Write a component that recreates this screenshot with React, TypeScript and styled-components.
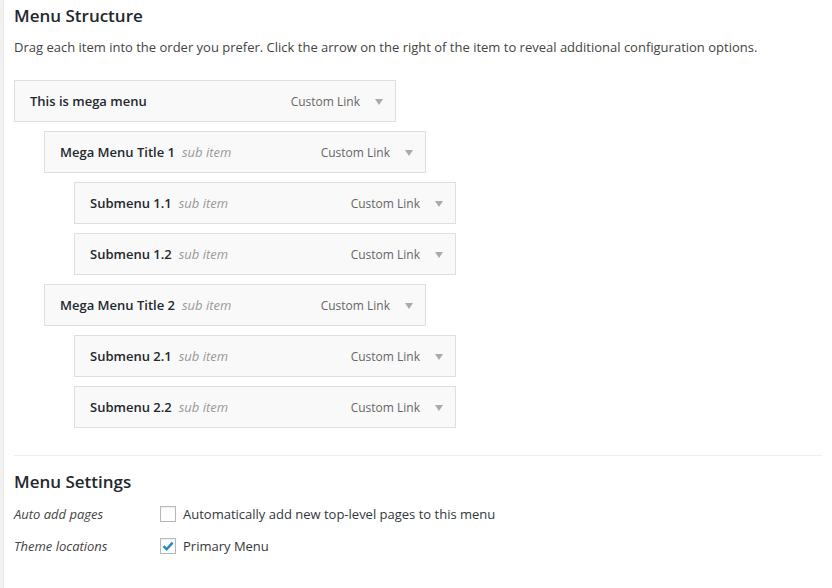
import styled, { createGlobalStyle } from "styled-components";

const GlobalStyle = createGlobalStyle`
  html, body {
    margin: 0;
    padding: 0;
    background: #fff;
  }
  body {
    font-family: "Open Sans", "Liberation Sans", sans-serif;
    color: #444;
    font-size: 13px;
  }
`;

type MenuItem = {
  title: string;
  depth: number;
};

const items: MenuItem[] = [
  { title: "This is mega menu", depth: 0 },
  { title: "Mega Menu Title 1", depth: 1 },
  { title: "Submenu 1.1", depth: 2 },
  { title: "Submenu 1.2", depth: 2 },
  { title: "Mega Menu Title 2", depth: 1 },
  { title: "Submenu 2.1", depth: 2 },
  { title: "Submenu 2.2", depth: 2 },
];

const Page = styled.div`
  display: flex;
  min-height: 588px;
`;

const Gutter = styled.div`
  width: 3px;
  flex-shrink: 0;
  background: #f1f1f1;
  border-right: 1px solid #e5e5e5;
`;

const Main = styled.div`
  flex: 1;
  padding: 0 10px 0 10px;
`;

const Heading = styled.h3`
  margin: 0;
  padding-top: 5px;
  font-size: 17px;
  font-weight: 600;
  line-height: 22px;
  color: #23282d;
`;

const Description = styled.p`
  margin: 10px 0 0;
  line-height: 20px;
  color: #444;
`;

const List = styled.ul`
  list-style: none;
  margin: 23px 0 0;
  padding: 0;
`;

const Item = styled.li<{ $depth: number }>`
  margin: 0 0 9px ${(p) => p.$depth * 30}px;
`;

const Bar = styled.div`
  box-sizing: border-box;
  width: 382px;
  height: 42px;
  display: flex;
  align-items: center;
  padding: 0 12px 0 15px;
  background: #f9f9f9;
  border: 1px solid #dfdfdf;
`;

const Title = styled.span`
  flex: 1;
  font-weight: 600;
  color: #23282d;
  white-space: nowrap;
`;

const SubItem = styled.span`
  margin-left: 7px;
  font-weight: 400;
  font-style: italic;
  color: #999;
`;

const Type = styled.span`
  font-size: 12px;
  color: #666;
  margin-right: 15px;
`;

const Arrow = styled.span`
  width: 0;
  height: 0;
  border-left: 4px solid transparent;
  border-right: 4px solid transparent;
  border-top: 6px solid #aaa;
  margin-top: 1px;
`;

const Separator = styled.hr`
  margin: 27px 0 0;
  border: 0;
  border-top: 1px solid #eee;
`;

const SettingsHeading = styled(Heading)`
  padding-top: 15px;
`;

const Row = styled.div<{ $first?: boolean }>`
  display: flex;
  align-items: center;
  margin-top: ${(p) => (p.$first ? 11 : 12)}px;
  line-height: 20px;
`;

const Label = styled.span`
  width: 146px;
  font-style: italic;
  color: #444;
`;

const Check = styled.span<{ $checked?: boolean }>`
  box-sizing: border-box;
  width: 16px;
  height: 16px;
  border: 1px solid #b4b9be;
  background: #fff;
  box-shadow: inset 0 1px 2px rgba(0, 0, 0, 0.07);
  margin-right: 7px;
  display: flex;
  align-items: center;
  justify-content: center;
`;

const CheckText = styled.span`
  color: #32373c;
`;

const CheckMark = () => (
  <svg width="14" height="14" viewBox="0 0 14 14">
    <path d="M2.5 7.2 L5.6 10.2 L11.6 3.6" fill="none" stroke="#1e8cbe" strokeWidth="2.4" />
  </svg>
);

export default function App() {
  return (
    <>
      <GlobalStyle />
      <Page>
        <Gutter />
        <Main>
          <Heading>Menu Structure</Heading>
          <Description>
            Drag each item into the order you prefer. Click the arrow on the right of the item to
            reveal additional configuration options.
          </Description>
          <List>
            {items.map((item) => (
              <Item key={item.title} $depth={item.depth}>
                <Bar>
                  <Title>
                    {item.title}
                    {item.depth > 0 && <SubItem>sub item</SubItem>}
                  </Title>
                  <Type>Custom Link</Type>
                  <Arrow />
                </Bar>
              </Item>
            ))}
          </List>
          <Separator />
          <SettingsHeading>Menu Settings</SettingsHeading>
          <Row $first>
            <Label>Auto add pages</Label>
            <Check />
            <CheckText>Automatically add new top-level pages to this menu</CheckText>
          </Row>
          <Row>
            <Label>Theme locations</Label>
            <Check $checked>
              <CheckMark />
            </Check>
            <CheckText>Primary Menu</CheckText>
          </Row>
        </Main>
      </Page>
    </>
  );
}
